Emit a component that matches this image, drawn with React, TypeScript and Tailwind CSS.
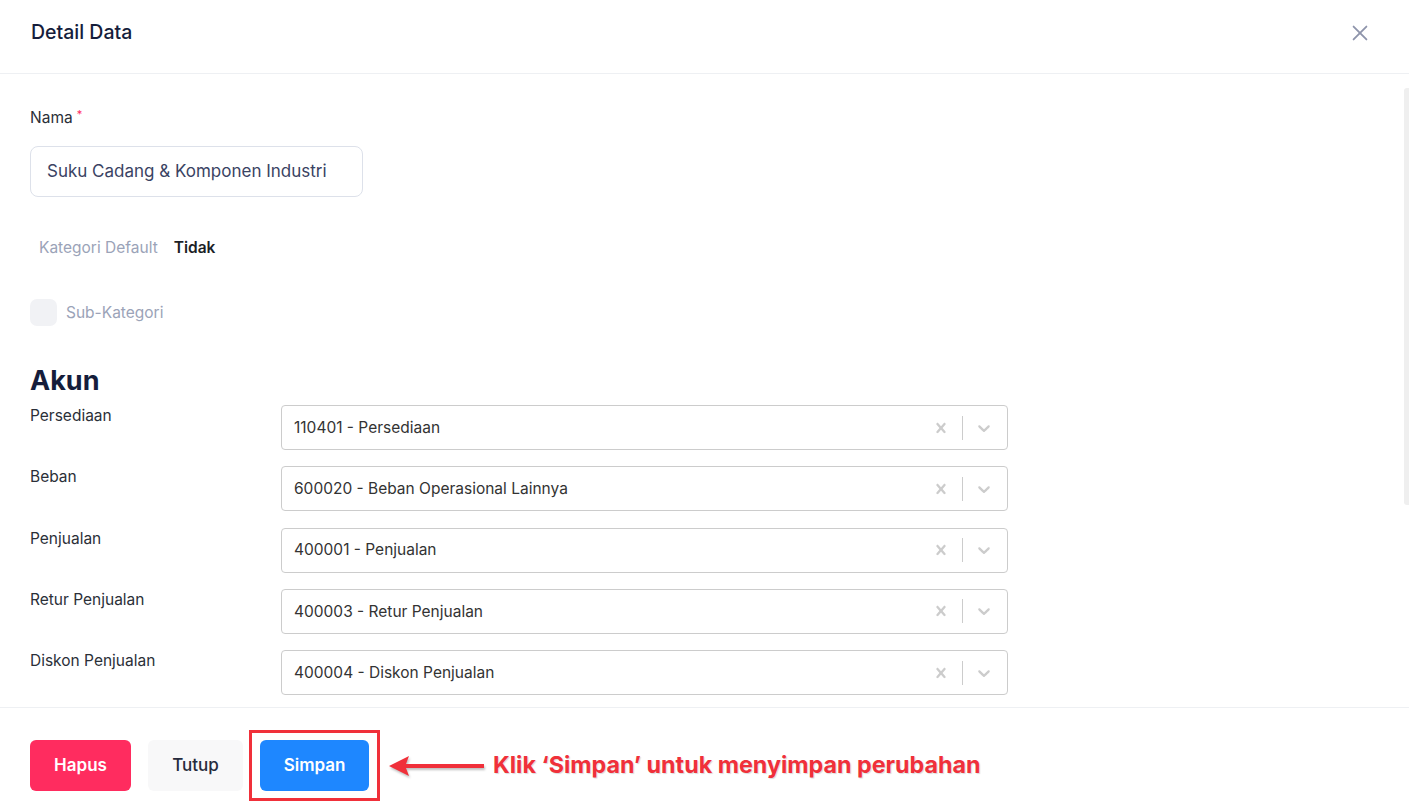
import { memo } from 'react'

const accounts = [
  { label: 'Persediaan', value: '110401 - Persediaan' },
  { label: 'Beban', value: '600020 - Beban Operasional Lainnya' },
  { label: 'Penjualan', value: '400001 - Penjualan' },
  { label: 'Retur Penjualan', value: '400003 - Retur Penjualan' },
  { label: 'Diskon Penjualan', value: '400004 - Diskon Penjualan' },
]

function CrossIcon() {
  return (
    <svg viewBox="0 0 20 20" className="h-5 w-5 fill-[#cccccc]">
      <path d="M14.348 14.849c-0.469 0.469-1.229 0.469-1.697 0l-2.651-3.030-2.651 3.029c-0.469 0.469-1.229 0.469-1.697 0-0.469-0.469-0.469-1.229 0-1.697l2.758-3.15-2.759-3.152c-0.469-0.469-0.469-1.228 0-1.697s1.228-0.469 1.697 0l2.652 3.031 2.651-3.031c0.469-0.469 1.228-0.469 1.697 0s0.469 1.229 0 1.697l-2.758 3.152 2.758 3.15c0.469 0.469 0.469 1.229 0 1.698z" />
    </svg>
  )
}

function ChevronIcon() {
  return (
    <svg viewBox="0 0 20 20" className="h-5 w-5 fill-[#cccccc]">
      <path d="M4.516 7.548c0.436-0.446 1.043-0.481 1.576 0l3.908 3.747 3.908-3.747c0.533-0.481 1.141-0.446 1.574 0 0.436 0.445 0.408 1.197 0 1.615-0.406 0.418-4.695 4.502-4.695 4.502-0.217 0.223-0.502 0.335-0.787 0.335s-0.57-0.112-0.789-0.335c0 0-4.287-4.084-4.695-4.502s-0.436-1.17 0-1.615z" />
    </svg>
  )
}

const AccountSelect = memo(function AccountSelect({ value }: { value: string }) {
  return (
    <div className="flex h-[45px] w-[727px] items-center rounded-[4px] border border-[#cccccc] bg-white">
      <div className="flex-1 pl-3 text-[15.5px] text-[#333333]">{value}</div>
      <div className="flex h-9 w-9 items-center justify-center">
        <CrossIcon />
      </div>
      <span className="mx-[3px] h-6 w-px bg-[#cccccc]" />
      <div className="mr-[5px] flex h-9 w-9 items-center justify-center">
        <ChevronIcon />
      </div>
    </div>
  )
})

export default function App() {
  return (
    <div
      className="flex h-[805px] w-full flex-col overflow-hidden bg-white"
      style={{ fontFamily: 'Inter, "Noto Sans", sans-serif' }}
    >
      {/* Header */}
      <header className="flex h-[74px] shrink-0 items-start justify-between border-b border-[#eef0f3] pl-[31px] pr-[38px] pt-[18px]">
        <h1 className="text-[19.5px] font-medium leading-[28px] text-[#151d3b]">Detail Data</h1>
        <svg viewBox="0 0 24 24" className="mt-[4px] h-[22px] w-[22px] stroke-[#8e94ab]" fill="none" strokeWidth={2} strokeLinecap="round">
          <path d="M5 5l14 14M19 5L5 19" />
        </svg>
      </header>

      {/* Body */}
      <div className="flex h-[633px] shrink-0">
        <div className="flex-1 overflow-hidden pl-[30px] pt-[33px]">
          <label className="flex items-start text-[15.5px] leading-[22px] text-[#2b2f38]">
            Nama
            <span className="ml-[4px] -mt-[4px] text-[11px] text-[#ff2c5f]">*</span>
          </label>
          <div className="mt-[17px] flex h-[51px] w-[333px] items-center rounded-[8px] border border-[#dde1ea] px-4 text-[17px] text-[#3a4363]">
            Suku Cadang &amp; Komponen Industri
          </div>

          <div className="mt-[40px] flex items-center gap-4 pl-[9px] text-[15.5px] leading-[22px]">
            <span className="text-[#9ba3b8]">Kategori Default</span>
            <span className="font-semibold text-[#1c1f26]">Tidak</span>
          </div>

          <div className="mt-[40px] flex items-center gap-[9px]">
            <span className="h-[27px] w-[27px] rounded-[7px] bg-[#f1f2f5]" />
            <span className="text-[15.5px] text-[#9ba3b8]">Sub-Kategori</span>
          </div>

          <h2 className="mt-[39px] text-[27px] font-bold leading-[32px] text-[#151d3b]">Akun</h2>

          <div className="mt-[8px] flex flex-col gap-[16.3px]">
            {accounts.map((acc) => (
              <div key={acc.label} className="flex items-start">
                <span className="w-[251px] text-[15.5px] leading-[22px] text-[#2b2f38]">{acc.label}</span>
                <AccountSelect value={acc.value} />
              </div>
            ))}
          </div>
        </div>

        {/* Scroll rail */}
        <div className="flex w-[5px] shrink-0 flex-col pt-[14px]">
          <div className="h-[417px] rounded-tl-[3px] rounded-bl-[3px] bg-[#efefef]" />
        </div>
      </div>

      {/* Footer */}
      <footer className="flex shrink-0 items-center border-t border-[#eef0f3] pl-[30px] pt-[22px]">
        <button className="h-[51px] w-[101px] rounded-[6px] bg-[#ff2c5f] text-[17px] font-semibold text-white">
          Hapus
        </button>
        <button className="ml-[17px] h-[51px] w-[95px] rounded-[6px] bg-[#f8f8f9] text-[17px] font-medium text-[#262b3d]">
          Tutup
        </button>
        <div className="ml-[6px] border-[3px] border-[#f0303a] px-[8px] py-[7px]">
          <button className="h-[51px] w-[109px] rounded-[6px] bg-[#1e87ff] text-[17px] font-semibold text-white">
            Simpan
          </button>
        </div>
        <svg viewBox="0 0 96 24" className="ml-[9px] h-[24px] w-[96px]" style={{ filter: 'drop-shadow(1px 2px 1px rgba(0,0,0,0.25))' }}>
          <path d="M0 12 L20 2 L17 10 L95 10 L95 14 L17 14 L20 22 Z" fill="#f0303a" />
        </svg>
        <span
          className="ml-[8px] text-[23.3px] font-bold text-[#f0303a]"
          style={{ textShadow: '1px 1px 1px rgba(0,0,0,0.15)' }}
        >
          Klik ‘Simpan’ untuk menyimpan perubahan
        </span>
      </footer>
    </div>
  )
}
